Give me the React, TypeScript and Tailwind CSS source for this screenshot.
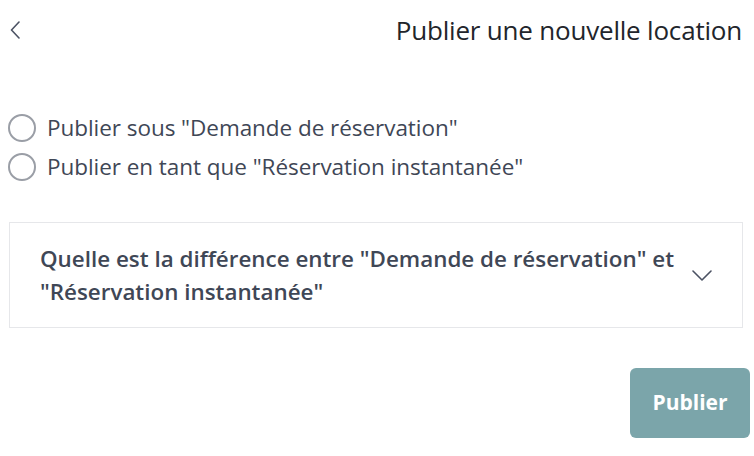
const options = [
  'Publier sous "Demande de réservation"',
  'Publier en tant que "Réservation instantanée"',
];

export default function App() {
  return (
    <div className="w-[754px] h-[456px] bg-white text-[#3f4756] font-['Open_Sans',sans-serif] overflow-hidden">
      {/* Header */}
      <div className="flex items-center justify-between h-[60px] pl-[10px] pr-[12px]">
        <svg width="10" height="18" viewBox="0 0 10 18" fill="none" className="text-[#4b5263]">
          <path d="M9 1 1.5 9 9 17" stroke="currentColor" strokeWidth="1.6" strokeLinecap="round" strokeLinejoin="round" />
        </svg>
        <h1 className="text-[26px] text-[#22252b] tracking-[-0.2px]">Publier une nouvelle location</h1>
      </div>

      {/* Options */}
      <div className="flex flex-col gap-[11px] pl-[8px] pt-[54px]">
        {options.map((label) => (
          <label key={label} className="flex items-center gap-[11px] h-[28px]">
            <span className="h-[28px] w-[28px] shrink-0 rounded-full border-2 border-[#9a9ea6] bg-white" />
            <span className="text-[22.5px] tracking-[-0.05px]">{label}</span>
          </label>
        ))}
      </div>

      {/* Accordion */}
      <div className="mt-[41px] ml-[9px] w-[734px] h-[106px] border border-[#e6e7ea] flex items-center justify-between pl-[30px] pr-[30px]">
        <p className="text-[22.4px] font-semibold leading-[33px] text-[#3f4756] w-[650px]">
          Quelle est la différence entre "Demande de réservation" et "Réservation instantanée"
        </p>
        <svg width="20" height="11" viewBox="0 0 20 11" fill="none" className="text-[#4b5263] shrink-0">
          <path d="M1 1 10 10 19 1" stroke="currentColor" strokeWidth="1.6" strokeLinecap="round" strokeLinejoin="round" />
        </svg>
      </div>

      {/* Footer */}
      <div className="flex justify-end pr-[4px] mt-[40px]">
        <button className="h-[70px] w-[120px] rounded-[6px] bg-[#7ba5aa] text-white text-[21px] font-bold">
          Publier
        </button>
      </div>
    </div>
  );
}
